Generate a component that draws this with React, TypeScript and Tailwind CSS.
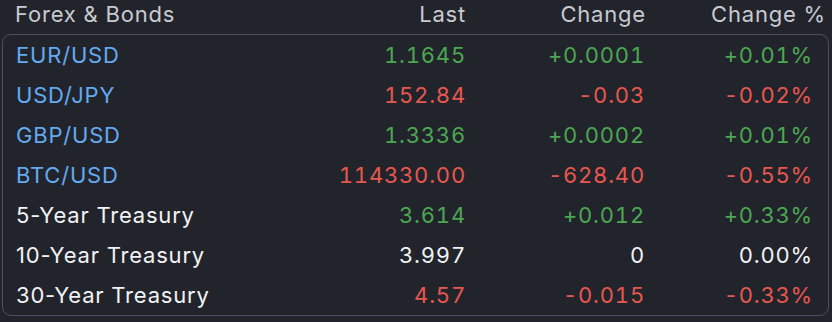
import React from "react";

type Row = { name: string; last: string; change: string; pct: string; dir: "up" | "down" | "flat"; fx: boolean };

const rows: Row[] = [
  { name: "EUR/USD", last: "1.1645", change: "+0.0001", pct: "+0.01%", dir: "up", fx: true },
  { name: "USD/JPY", last: "152.84", change: "-0.03", pct: "-0.02%", dir: "down", fx: true },
  { name: "GBP/USD", last: "1.3336", change: "+0.0002", pct: "+0.01%", dir: "up", fx: true },
  { name: "BTC/USD", last: "114330.00", change: "-628.40", pct: "-0.55%", dir: "down", fx: true },
  { name: "5-Year Treasury", last: "3.614", change: "+0.012", pct: "+0.33%", dir: "up", fx: false },
  { name: "10-Year Treasury", last: "3.997", change: "0", pct: "0.00%", dir: "flat", fx: false },
  { name: "30-Year Treasury", last: "4.57", change: "-0.015", pct: "-0.33%", dir: "down", fx: false },
];

const colorOf = (d: Row["dir"]) =>
  d === "up" ? "text-[#4ca753]" : d === "down" ? "text-[#e8574f]" : "text-[#f2f2f4]";

export default function App() {
  return (
    <div
      className="w-[832px] h-[322px] bg-[#22242c] overflow-hidden text-[22px] tracking-[0.8px]"
      style={{ fontFamily: "Inter, 'Noto Sans', sans-serif" }}
    >
      <div className="grid grid-cols-[271px_180px_180px_180px] h-[34px] pl-[15px] leading-[28px] text-[#c9cad0]">
        <div>Forex &amp; Bonds</div>
        <div className="text-right">Last</div>
        <div className="text-right">Change</div>
        <div className="text-right">Change %</div>
      </div>
      <div className="ml-[2px] mr-[3px] border border-[#4d505c] rounded-[9px] pl-[13px] pr-[14px]">
        {rows.map((r) => (
          <div key={r.name} className="grid grid-cols-[270px_180px_179px_168px] h-[40px] items-center leading-[28px]">
            <div className={r.fx ? "text-[#64aaf0]" : "text-[#f2f2f4]"}>{r.name}</div>
            <div className={`text-right tabular-nums ${colorOf(r.dir)}`}>{r.last}</div>
            <div className={`text-right tabular-nums ${colorOf(r.dir)}`}>{r.change}</div>
            <div className={`text-right tabular-nums ${colorOf(r.dir)}`}>{r.pct}</div>
          </div>
        ))}
      </div>
    </div>
  );
}
